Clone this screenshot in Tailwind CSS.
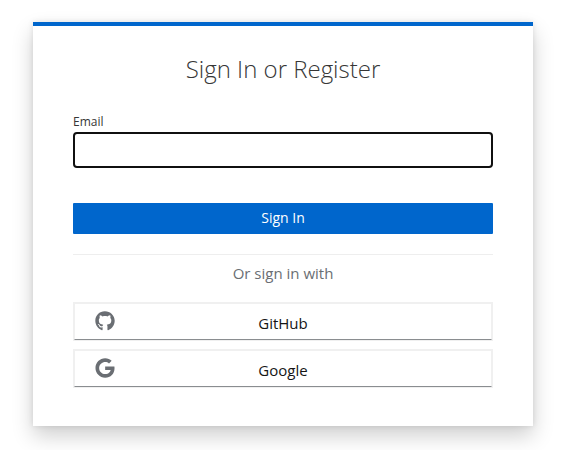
<!DOCTYPE html>
<html lang="en"><head><meta charset="utf-8"><title>Sign In or Register</title>
<script src="https://cdn.jsdelivr.net/npm/@tailwindcss/browser@4"></script></head>
<body class="min-h-screen bg-white pt-[22px] pl-[33px] font-['Open_Sans',sans-serif] text-[#363636]">
<main class="h-[404px] w-[500px] border-t-4 border-[#06c] bg-white px-10 shadow-[0_10px_20px_rgba(3,3,3,0.19),0_0_6px_rgba(3,3,3,0.1)]">
<h1 class="pt-[25px] text-center text-2xl leading-[36px] font-light">Sign In or Register</h1>
<form>
<label for="email" class="mt-[26px] block text-xs leading-[18px]">Email</label>
<input id="email" class="mt-px block h-[36px] w-full rounded-[4px] border-2 border-[#101010] bg-white px-2 outline-none">
<button type="button" class="mt-[35px] block h-[31px] w-full rounded-[1px] bg-[#06c] pb-[2px] text-sm leading-[21px] text-white">Sign In</button>
</form>
<section>
<hr class="mt-5 border-[#eee]">
<h2 class="mt-[6px] text-center text-[15px] leading-6 text-[#6a6e73]">Or sign in with</h2>
<a class="relative mx-px mt-[18px] flex h-[37px] items-center justify-center border border-[#f0f0f0] border-b-[#8a8d90] pt-[3px] text-[15px] text-[#151515] shadow-[0_0_0_1px_#f0f0f0]"><svg class="absolute left-5 top-[7px] size-5 fill-[#6a6e73]" viewBox="0 0 496 512"><path d="M165.900 397.400c0 2-2.300 3.600-5.200 3.600-3.300.3-5.600-1.300-5.600-3.600 0-2 2.300-3.600 5.200-3.600 3-.3 5.600 1.300 5.600 3.600zM244.800 8C106.100 8 0 113.300 0 252c0 110.900 69.800 205.800 169.500 239.200 12.800 2.300 17.300-5.600 17.300-12.100 0-6.200-.3-40.400-.3-61.400 0 0-70 15-84.700-29.800 0 0-11.400-29.100-27.800-36.600 0 0-22.900-15.700 1.600-15.400 0 0 24.900 2 38.600 25.800 21.900 38.600 58.600 27.500 72.900 20.900 2.300-16 8.800-27.100 16-33.700-55.900-6.200-112.300-14.300-112.300-110.500 0-27.500 7.600-41.300 23.600-58.900-2.600-6.500-11.100-33.300 2.600-67.900 20.900-6.500 69 27 69 27 20-5.600 41.500-8.500 62.800-8.500s42.800 2.900 62.800 8.500c0 0 48.100-33.600 69-27 13.700 34.700 5.200 61.400 2.600 67.900 16 17.700 25.800 31.500 25.800 58.900 0 96.500-58.900 104.200-114.800 110.500 9.200 7.900 17 22.900 17 46.400 0 33.700-.3 75.400-.3 83.600 0 6.500 4.600 14.400 17.300 12.100C428.200 457.800 496 362.900 496 252 496 113.300 383.500 8 244.800 8z"/></svg>GitHub</a>
<a class="relative mx-px mt-[10px] flex h-[37px] items-center justify-center border border-[#f0f0f0] border-b-[#8a8d90] pt-[3px] text-[15px] text-[#151515] shadow-[0_0_0_1px_#f0f0f0]"><svg class="absolute left-5 top-[7px] size-5 fill-[#6a6e73]" viewBox="0 0 488 512"><path d="M488 261.800C488 403.300 391.100 504 248 504 110.800 504 0 393.200 0 256S110.800 8 248 8c66.800 0 123 24.500 166.300 64.900l-67.500 64.900C258.500 52.600 94.300 116.600 94.300 256c0 86.500 69.100 156.600 153.700 156.600 98.200 0 135-70.400 140.800-106.900H248v-85.300h236.100c2.300 12.700 3.900 24.900 3.900 41.400z"/></svg>Google</a>
</section>
</main>
</body></html>
